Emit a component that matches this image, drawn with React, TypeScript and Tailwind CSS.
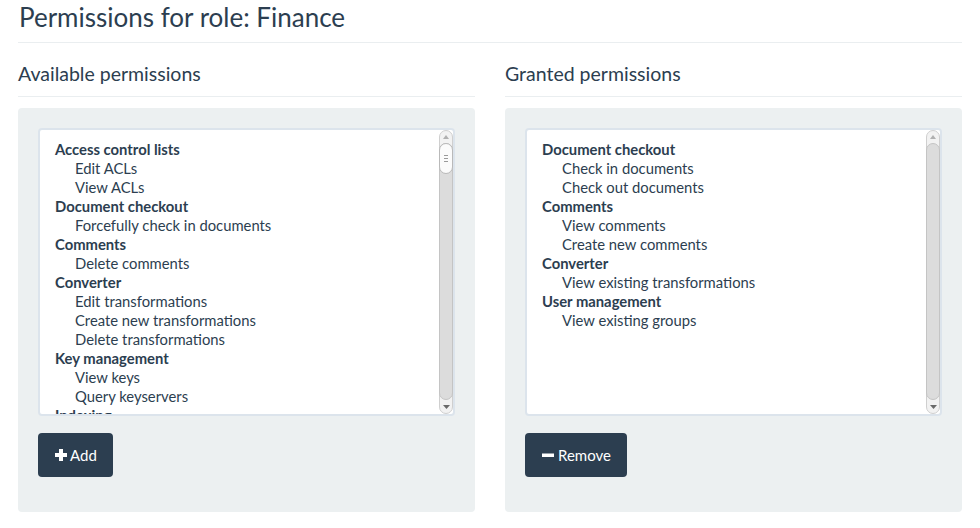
import React from "react";

type Group = { title: string; items: string[] };

const available: Group[] = [
  { title: "Access control lists", items: ["Edit ACLs", "View ACLs"] },
  { title: "Document checkout", items: ["Forcefully check in documents"] },
  { title: "Comments", items: ["Delete comments"] },
  {
    title: "Converter",
    items: ["Edit transformations", "Create new transformations", "Delete transformations"],
  },
  { title: "Key management", items: ["View keys", "Query keyservers"] },
  { title: "Indexing", items: ["Edit indexes", "View indexes"] },
];

const granted: Group[] = [
  { title: "Document checkout", items: ["Check in documents", "Check out documents"] },
  { title: "Comments", items: ["View comments", "Create new comments"] },
  { title: "Converter", items: ["View existing transformations"] },
  { title: "User management", items: ["View existing groups"] },
];

function Scrollbar({ thumb }: { thumb: boolean }) {
  return (
    <div className="flex h-full w-[14px] shrink-0 flex-col rounded-[7px] border border-[#cfcfcf] bg-[#f2f2f2]">
      <div className="flex h-[12px] shrink-0 items-center justify-center">
        <svg width="6" height="4" viewBox="0 0 6 4">
          <path d="M0 4 L3 0 L6 4 Z" fill="#b0b0b0" />
        </svg>
      </div>
      <div className="mx-[-1px] flex flex-1 flex-col rounded-[7px] border border-[#c4c4c4] bg-[#dcdcdc]">
        {thumb && (
          <div className="mx-[-1px] mt-[-1px] flex h-[31px] flex-col items-center justify-center gap-[2px] rounded-[7px] border border-[#b9b9b9] bg-[#fbfbfb]">
            <div className="h-[1px] w-[4px] bg-[#9a9a9a]" />
            <div className="h-[1px] w-[4px] bg-[#9a9a9a]" />
            <div className="h-[1px] w-[4px] bg-[#9a9a9a]" />
          </div>
        )}
      </div>
      <div className="flex h-[13px] shrink-0 items-center justify-center">
        <svg width="7" height="4" viewBox="0 0 7 4">
          <path d="M0 0 L7 0 L3.5 4 Z" fill="#6a6a6a" />
        </svg>
      </div>
    </div>
  );
}

function ListBox({ groups, thumb }: { groups: Group[]; thumb: boolean }) {
  return (
    <div className="flex h-[288px] rounded-[4px] border-2 border-[#dce4ec] bg-white">
      <div className="flex-1 overflow-hidden pl-[15px] pt-[10px] text-[14.8px] leading-[19px] text-[#2c3e50]">
        {groups.map((g) => (
          <div key={g.title}>
            <div className="font-bold">{g.title}</div>
            {g.items.map((it) => (
              <div key={it} className="pl-[20px]">
                {it}
              </div>
            ))}
          </div>
        ))}
      </div>
      <Scrollbar thumb={thumb} />
    </div>
  );
}

function PlusIcon() {
  return (
    <svg width="12" height="12" viewBox="0 0 12 12" className="shrink-0">
      <rect x="4" y="0" width="4" height="12" fill="white" />
      <rect x="0" y="4" width="12" height="4" fill="white" />
    </svg>
  );
}

function MinusIcon() {
  return (
    <svg width="12" height="12" viewBox="0 0 12 12" className="shrink-0">
      <rect x="0" y="4.5" width="12" height="3.5" fill="white" />
    </svg>
  );
}

function Column({
  title,
  groups,
  thumb,
  button,
}: {
  title: string;
  groups: Group[];
  thumb: boolean;
  button: React.ReactNode;
}) {
  return (
    <div className="flex flex-col">
      <div className="mt-[19px] border-b border-[#eaeef0] pb-[10px] text-[19.5px] leading-[24px] text-[#2c3e50]">
        {title}
      </div>
      <div className="mt-[11px] rounded-[4px] bg-[#ecf0f1] px-[20px] pb-[35px] pt-[20px]">
        <ListBox groups={groups} thumb={thumb} />
        <div className="mt-[17px] flex">{button}</div>
      </div>
    </div>
  );
}

export default function App() {
  return (
    <div
      className="h-[528px] w-[980px] bg-white px-[18px] text-[#2c3e50]"
      style={{ fontFamily: "Lato, 'Open Sans', sans-serif" }}
    >
      <div className="h-[43px] border-b border-[#eaeef0] pl-[1px] pt-[1px] text-[26px] leading-[32px]">
        Permissions for role: Finance
      </div>
      <div className="grid grid-cols-2 gap-x-[30px]">
        <Column
          title="Available permissions"
          groups={available}
          thumb={true}
          button={
            <button className="flex h-[44px] items-center gap-[3px] whitespace-nowrap rounded-[4px] bg-[#2c3e50] pl-[17px] pr-[16px] text-[15px] leading-[20px] text-white">
              <PlusIcon />
              <span>Add</span>
            </button>
          }
        />
        <Column
          title="Granted permissions"
          groups={granted}
          thumb={false}
          button={
            <button className="flex h-[44px] items-center gap-[4px] whitespace-nowrap rounded-[4px] bg-[#2c3e50] pl-[17px] pr-[16px] text-[15px] leading-[20px] text-white">
              <MinusIcon />
              <span>Remove</span>
            </button>
          }
        />
      </div>
    </div>
  );
}
